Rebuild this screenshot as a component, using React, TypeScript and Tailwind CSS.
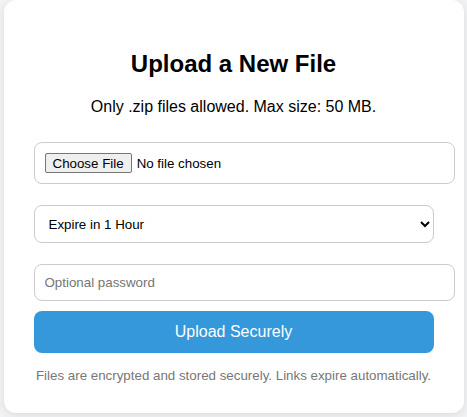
import React from 'react';

export default function App() {
    return (
        <div className="min-h-[417px] bg-[#f2f3f5] font-['Liberation_Sans',Arial,sans-serif] text-black">
            <div className="mx-auto w-[460px] rounded-[12px] bg-white p-[30px] text-center shadow-[0_2px_10px_rgba(0,0,0,0.1)]">
                <h2 className="mt-[20px] mb-[20px] text-[24px] leading-[28px] font-bold">
                    Upload a New File
                </h2>
                <p className="mb-[26px] text-[16px] leading-[18px]">
                    Only .zip files allowed. Max size: 50 MB.
                </p>

                {/* selector de archivo */}
                <input
                    type="file"
                    accept=".zip"
                    className="block h-[42px] w-[421px] rounded-[8px] border border-[#ccc] p-[10px] text-left text-[13.33px] leading-[20px] file:mr-[5px] file:h-[20px] file:rounded-[2px] file:border file:border-[#767676] file:bg-[#efefef] file:px-[7px] file:text-[13.33px] file:text-black"
                />

                <select className="mt-[21px] block h-[38px] w-full rounded-[8px] border border-[#ccc] px-[10px] text-left text-[13.33px]">
                    <option>Expire in 1 Hour</option>
                    <option>Expire in 1 Day</option>
                    <option>Expire in 7 Days</option>
                </select>

                <input
                    type="password"
                    placeholder="Optional password"
                    className="mt-[21px] block h-[37px] w-[421px] rounded-[8px] border border-[#ccc] px-[10px] text-left text-[13.33px] placeholder:text-[#757575]"
                />

                <button
                    type="button"
                    className="mt-[10px] block h-[42px] w-full rounded-[8px] bg-[#3498db] text-[16px] text-white"
                >
                    Upload Securely
                </button>

                <p className="mt-[15px] text-[13.33px] leading-[15px] text-[#777]">
                    Files are encrypted and stored securely. Links expire automatically.
                </p>
            </div>
        </div>
    );
}
